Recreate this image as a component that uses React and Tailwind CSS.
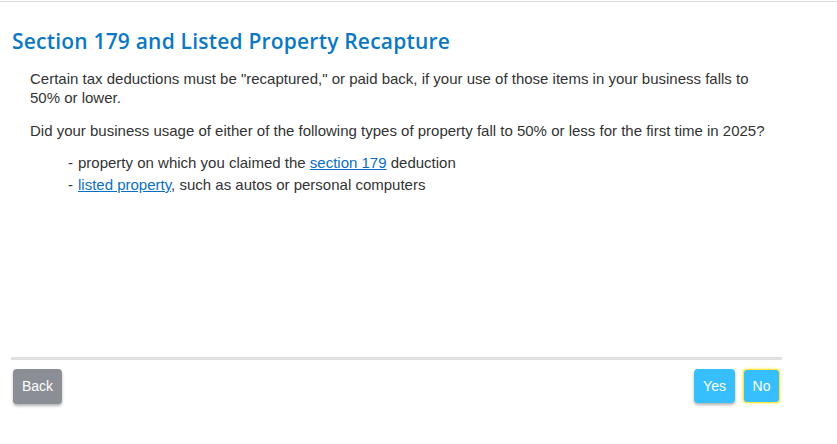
export default function App() {
  return (
    <div className="w-[837px] h-[444px] bg-white relative" style={{ fontFamily: '"Liberation Sans", Arial, sans-serif' }}>
      <div className="h-px mt-px bg-[#dcdcdc] w-full" />
      <div className="pl-[12px] w-[783px]">
        <h1 className="mt-[24px] text-[21px] leading-[30px] font-semibold tracking-[0.2px] text-[#0b78c4]" style={{ fontFamily: '"Open Sans", Lato, sans-serif' }}>
          Section 179 and Listed Property Recapture
        </h1>
        <div className="ml-[18px] mr-[6px] mt-[13px] text-[15px] leading-[19px] text-[#333333]">
          <p>Certain tax deductions must be "recaptured," or paid back, if your use of those items in your business falls to 50% or lower.</p>
          <p className="mt-[14px]">Did your business usage of either of the following types of property fall to 50% or less for the first time in 2025?</p>
          <ul className="mt-[12px] ml-[38px] leading-[22px]">
            <li className="flex"><span className="w-[10px]">-</span><span>property on which you claimed the <a className="text-[#0a6fc2] underline">section 179</a> deduction</span></li>
            <li className="flex"><span className="w-[10px]">-</span><span><a className="text-[#0a6fc2] underline">listed property</a>, such as autos or personal computers</span></li>
          </ul>
        </div>
      </div>
      <div className="absolute left-[11px] top-[356px] w-[771px]">
        <div className="h-[3px] bg-[#e0e0e0]" />
        <div className="flex justify-between mt-[9px] pl-[2px] pr-[2px]">
          <button className="h-[35px] w-[49px] rounded-[4px] bg-[#8b8e95] text-white text-[14px] shadow-[0_2px_3px_rgba(0,0,0,0.3)]">Back</button>
          <div className="flex gap-[8px]">
            <button className="h-[34px] w-[41px] rounded-[4px] bg-[#36bffc] text-white text-[14px] shadow-[0_2px_3px_rgba(0,0,0,0.3)]">Yes</button>
            <button className="h-[34px] w-[37px] rounded-[4px] bg-[#36bffc] text-white text-[14px] border border-[#ffe640] shadow-[0_0_3px_#ffe640]">No</button>
          </div>
        </div>
      </div>
    </div>
  );
}
